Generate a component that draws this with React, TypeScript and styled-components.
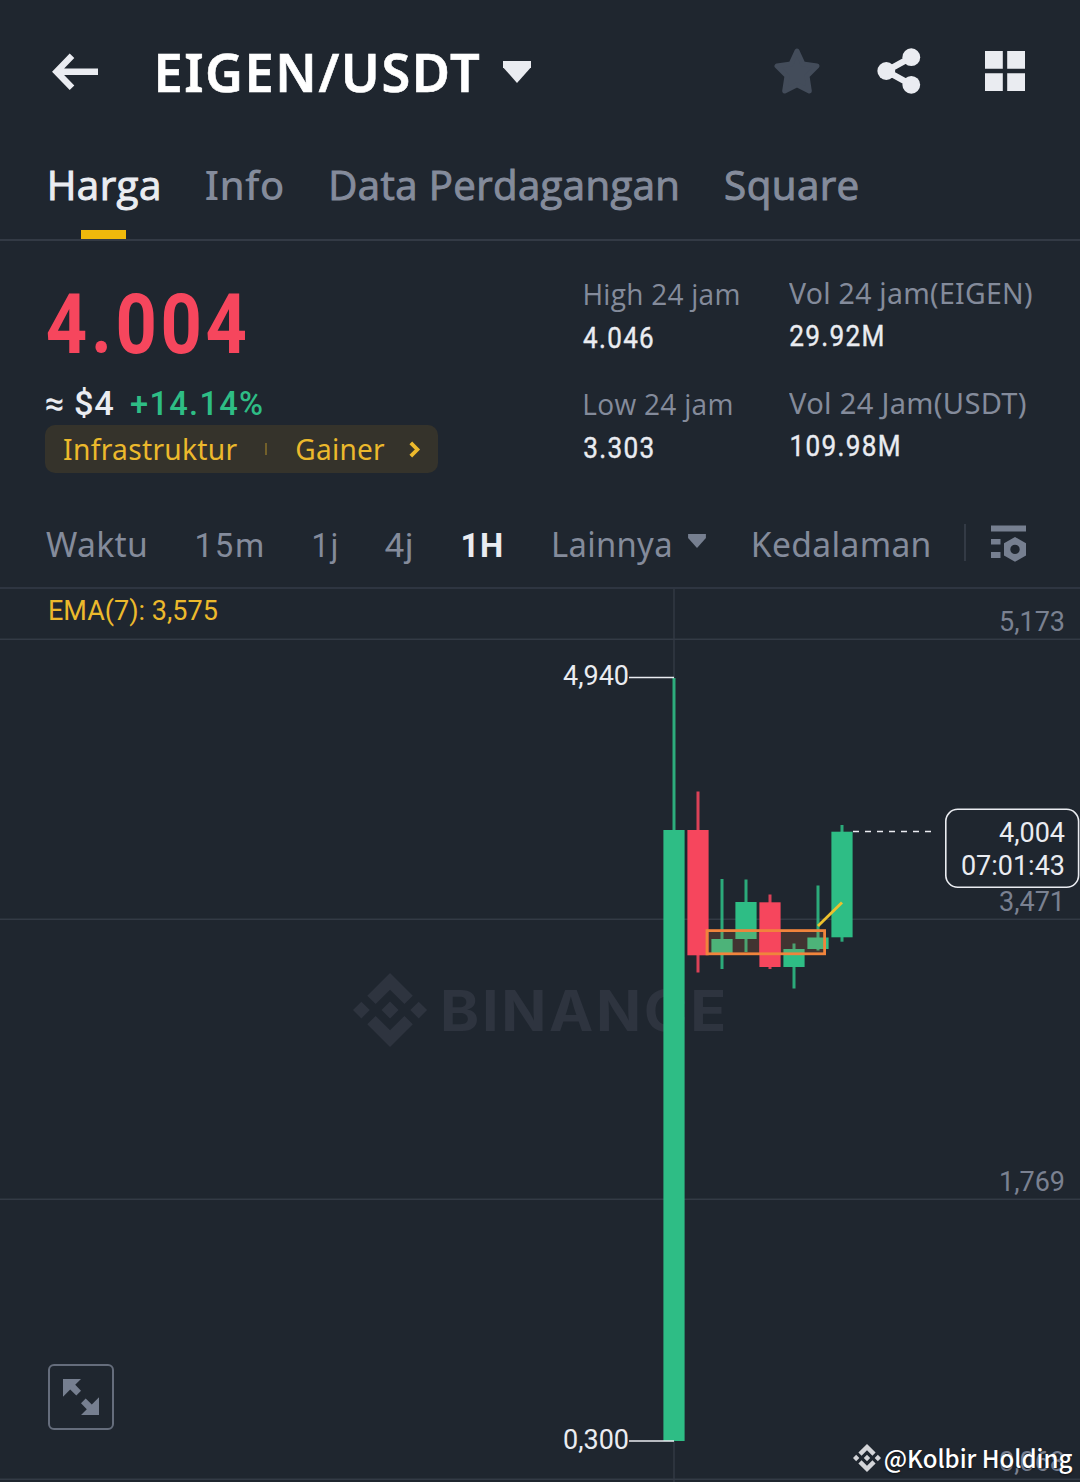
import React, { useLayoutEffect, useRef, useState } from 'react';
import styled, { createGlobalStyle } from 'styled-components';

const c = {
  bg: '#1f262f',
  line: '#333a45',
  grid: '#2e3541',
  text: '#eaecf1',
  white: '#ffffff',
  muted: '#848b9b',
  icon: '#767f90',
  yellow: '#f0b90b',
  gold: '#ecb92c',
  green: '#2ebd85',
  red: '#f6465d',
  orange: '#f0843c',
};

const open = '"Open Sans", "Noto Sans", sans-serif';
const noto = '"Noto Sans", "Open Sans", sans-serif';
const roboto = 'Roboto, "Noto Sans", sans-serif';
const cjk = '"Noto Sans CJK SC", "Noto Sans", sans-serif';

const Global = createGlobalStyle`
  html, body { margin: 0; padding: 0; background: ${c.bg}; }
  * { box-sizing: border-box; }
  svg { display: block; flex: none; }
`;

const Page = styled.main`
  width: 1080px;
  height: 1482px;
  overflow: hidden;
  display: flex;
  flex-direction: column;
  background: ${c.bg};
  color: ${c.text};
  font-family: ${open};
`;

/* ---------- text fitted to a column width ---------- */

const FitBox = styled.span<{ $w: number }>`
  display: flex;
  flex: none;
  width: ${(p) => p.$w}px;
  white-space: nowrap;
`;

const FitInner = styled.span<{
  $size: number;
  $weight: number;
  $color: string;
  $font: string;
  $ls: number;
  $stroke: number;
}>`
  display: block;
  flex: none;
  transform-origin: 0 50%;
  font-family: ${(p) => p.$font};
  font-size: ${(p) => p.$size}px;
  font-weight: ${(p) => p.$weight};
  letter-spacing: ${(p) => p.$ls}em;
  color: ${(p) => p.$color};
  -webkit-text-stroke: ${(p) => p.$stroke}px ${(p) => p.$color};
`;

type FitProps = {
  w: number;
  inset?: number;
  trim?: number;
  size: number;
  weight?: number;
  color?: string;
  font?: string;
  ls?: number;
  stroke?: number;
  children: string;
};

function Fit({
  w,
  inset = 0,
  trim = 0,
  size,
  weight = 400,
  color = c.text,
  font = open,
  ls = 0.01,
  stroke = 0,
  children,
}: FitProps) {
  const ref = useRef<HTMLSpanElement>(null);
  const [transform, setTransform] = useState('none');
  useLayoutEffect(() => {
    const ctx = document.createElement('canvas').getContext('2d');
    if (!ref.current || !ctx) return;
    // Measured at ten times the size, so that the ink bounds are precise.
    ctx.font = `${weight} ${size * 10}px ${font}`;
    const m = ctx.measureText(children);
    const left = m.actualBoundingBoxLeft / 10;
    const ink = left + m.actualBoundingBoxRight / 10 + ls * size * (children.length - 1);
    const k = (w - trim) / ink;
    setTransform(`translateX(${left * k + inset}px) scaleX(${k})`);
  }, [w, inset, trim, size, weight, font, ls, children]);
  return (
    <FitBox $w={w}>
      <FitInner
        ref={ref}
        $size={size}
        $weight={weight}
        $color={color}
        $font={font}
        $ls={ls}
        $stroke={stroke}
        style={{ transform }}
      >
        {children}
      </FitInner>
    </FitBox>
  );
}

/* ---------- header ---------- */

const Header = styled.header`
  height: 143px;
  flex: none;
  display: flex;
  align-items: center;
  padding: 0 55px 0 52px;
  line-height: 144px;
`;

const Title = styled.h1`
  display: flex;
  align-items: center;
  gap: 23px;
  margin: 0 auto 0 57px;
  font-size: inherit;
`;

const Actions = styled.div`
  display: flex;
  align-items: center;
  gap: 57px;
  margin-bottom: 1px;
`;

const GridSlot = styled.div`
  margin-left: 7px;
`;

const BackIcon = () => (
  <svg width="46" height="40" viewBox="52 51.5 46 40">
    <path d="M72 55.2 56.5 71.2 72 87.2M57 71.2H98" fill="none" stroke={c.text} strokeWidth="6.4" />
  </svg>
);

const Caret = ({ w, h, color }: { w: number; h: number; color: string }) => (
  <svg width={w} height={h} viewBox="0 0 28 22">
    <path d="M0 0H28V6.2L14 22 0 6.2Z" fill={color} />
  </svg>
);

const StarIcon = () => (
  <svg width="46" height="48" viewBox="774 47 46 48">
    <path
      d="M797 51 803 64 817 66 807 76 809.3 91 797 84.8 784.7 91 787 76 777 66 791 64Z"
      fill="#434c5a"
      stroke="#434c5a"
      strokeWidth="5"
      strokeLinejoin="round"
    />
  </svg>
);

const ShareIcon = () => (
  <svg width="44" height="48" viewBox="877 47 44 48">
    <path d="M911.3 57.2 886.3 71 911.3 84.8" fill="none" stroke={c.text} strokeWidth="6.4" />
    <circle cx="911.3" cy="57.2" r="8.9" fill={c.text} />
    <circle cx="886.3" cy="71" r="8.9" fill={c.text} />
    <circle cx="911.3" cy="84.8" r="8.9" fill={c.text} />
  </svg>
);

const GridIcon = () => (
  <svg width="40" height="40" viewBox="0 0 40 40">
    <path d="M0 0H17.8V17.8H0ZM22.2 0H40V17.8H22.2ZM0 22.2H17.8V40H0ZM22.2 22.2H40V40H22.2Z" fill={c.text} />
  </svg>
);

/* ---------- tabs ---------- */

const Tabs = styled.nav`
  height: 98px;
  flex: none;
  display: flex;
  gap: 46px;
  padding-left: 48px;
  border-bottom: 2px solid ${c.line};
  line-height: 84px;
`;

const Tab = styled.div`
  display: flex;
  flex-direction: column;
  align-items: center;
  height: 96px;
`;

const Underline = styled.i`
  flex: none;
  width: 45px;
  height: 9px;
  margin: 3px 1px 0 0;
  background: ${c.yellow};
`;

/* ---------- summary ---------- */

const Summary = styled.section`
  height: 259px;
  flex: none;
  display: flex;
`;

const PriceCol = styled.div`
  width: 538px;
  margin-left: 45px;
  padding-top: 33px;
  display: flex;
  flex-direction: column;
`;

const Price = styled.div`
  height: 107px;
  padding-left: 2px;
  line-height: 101px;
`;

const Change = styled.div`
  display: flex;
  gap: 17px;
  height: 44px;
  padding-left: 1px;
  line-height: 44px;
`;

const Chips = styled.div`
  display: flex;
  align-items: center;
  width: 393px;
  height: 48px;
  padding-left: 19px;
  border-radius: 10px;
  background: #35332b;
  line-height: 48px;
`;

const ChipDivider = styled.i`
  width: 2px;
  height: 12px;
  margin: 0 29px 0 28px;
  background: #72602a;
`;

const Chevron = styled.svg`
  margin-left: 25px;
`;

const StatCol = styled.div<{ $w: number; $top: number }>`
  width: ${(p) => p.$w}px;
  padding-top: ${(p) => p.$top}px;
  display: flex;
  flex-direction: column;
  gap: 22px;
`;

const Stat = styled.div`
  display: flex;
  flex-direction: column;
`;

const StatLabel = styled.div`
  height: 40px;
  line-height: 40px;
`;

const StatValue = styled.div<{ $lh: number }>`
  height: 48px;
  line-height: ${(p) => p.$lh}px;
`;

/* ---------- interval bar ---------- */

const Intervals = styled.nav`
  height: 89px;
  flex: none;
  display: flex;
  align-items: baseline;
  padding-left: 46px;
  border-bottom: 2px solid ${c.grid};
  line-height: 88px;
`;

const Slot = styled.div<{ $ml?: number }>`
  margin-left: ${(p) => p.$ml ?? 0}px;
`;

const IconSlot = styled.div<{ $ml: number; $up?: number }>`
  align-self: center;
  margin-left: ${(p) => p.$ml}px;
  margin-bottom: ${(p) => p.$up ?? 0}px;
`;

const BarDivider = styled.i`
  align-self: center;
  width: 2px;
  height: 37px;
  margin: 0 25px 2px 34px;
  background: ${c.line};
`;

const SettingsIcon = () => (
  <svg width="36" height="37" viewBox="0 0 36 37">
    <path d="M0 0.5H35V6.5H0ZM0 14H9.5V19.5H0ZM0 27H9.5V33H0Z" fill={c.icon} />
    <path
      fillRule="evenodd"
      fill={c.icon}
      d="M24 12 35 18.2V30.6L24 36.8 13 30.6V18.2ZM24 19.7A4.7 4.7 0 1 0 24 29.1 4.7 4.7 0 1 0 24 19.7Z"
    />
  </svg>
);

/* ---------- chart ---------- */

const ChartArea = styled.section`
  position: relative;
  height: 893px;
  flex: none;
`;

const ExpandButton = styled.button`
  position: absolute;
  left: 48px;
  top: 775px;
  width: 66px;
  height: 66px;
  padding: 0;
  display: grid;
  place-items: center;
  border: 2px solid #656d7c;
  border-radius: 6px;
  background: transparent;
`;

const Credit = styled.div`
  position: absolute;
  left: 853px;
  top: 850px;
  display: flex;
  align-items: center;
  gap: 4px;
  line-height: 37px;
  text-shadow: 0 1px 2px rgba(0, 0, 0, 0.6);
`;

const AxisText = styled.text<{ $fill?: string }>`
  font-family: ${roboto};
  font-size: 27px;
  fill: ${(p) => p.$fill ?? '#7a8191'};
`;

const MarkText = styled.text`
  font-family: Inter, ${roboto};
  font-size: 56px;
  font-weight: 700;
  letter-spacing: 2.5px;
  fill: #2e343f;
`;

const LogoPaths = ({ fill }: { fill: string }) => (
  <path
    fill={fill}
    d="M38.7 53.2 63.3 28.6 87.9 53.2 102.2 38.9 63.3 0 24.4 38.9ZM0 63.3 14.3 49 28.6 63.3 14.3 77.6ZM38.7 73.4 63.3 98 87.9 73.4 102.2 87.7 63.3 126.6 24.4 87.7ZM98 63.3 112.3 49 126.6 63.3 112.3 77.6ZM77.8 63.3 63.3 48.8 48.8 63.3 63.3 77.8Z"
  />
);

type Candle = { x: number; top: number; bottom: number; high: number; low: number; up: boolean };

const candles: Candle[] = [
  { x: 674, top: 830, bottom: 1441, high: 678, low: 1441, up: true },
  { x: 698, top: 830, bottom: 955.3, high: 791.5, low: 972.5, up: false },
  { x: 722, top: 939, bottom: 955, high: 879, low: 969, up: true },
  { x: 746, top: 902, bottom: 939, high: 879.5, low: 952, up: true },
  { x: 770, top: 902.3, bottom: 967, high: 894.5, low: 969, up: false },
  { x: 794, top: 949, bottom: 967, high: 943.5, low: 988.5, up: true },
  { x: 818, top: 937.5, bottom: 949, high: 885.5, low: 950.5, up: true },
  { x: 842, top: 831.7, bottom: 937.3, high: 825, low: 941.7, up: true },
];

const Chart = () => (
  <svg width="1080" height="893" viewBox="0 589 1080 893">
    <path d="M0 639.3H1080M0 919.3H1080M0 1199.3H1080M0 1479.3H1080M674 589V1482" stroke={c.line} strokeWidth="1.4" />
    <g transform="translate(353 973) scale(.585)">
      <LogoPaths fill="#2e343f" />
    </g>
    <MarkText x="440" y="1030.5" textLength="289" lengthAdjust="spacingAndGlyphs">BINANCE</MarkText>
    {candles.map((k) => (
      <g key={k.x} fill={k.up ? c.green : c.red}>
        <rect x={k.x - 1.5} y={k.high} width="3" height={k.low - k.high} opacity="0.88" />
        <rect x={k.x - 10.6} y={k.top} width="21.2" height={k.bottom - k.top} />
      </g>
    ))}
    <rect x="707" y="930.6" width="117.6" height="23.2" fill="rgba(240,132,60,.16)" />
    <rect x="759.4" y="930" width="21.2" height="25" fill={c.red} />
    <rect x="707" y="930.6" width="117.6" height="23.2" fill="none" stroke={c.orange} strokeWidth="2.8" />
    <path d="M818 926 842 902.6" stroke="#eec12d" strokeWidth="2.8" />
    <path d="M629 677.5H674M629 1441H674" stroke={c.text} strokeWidth="1.6" />
    <path d="M853 831.5H931" stroke={c.text} strokeWidth="1.6" strokeDasharray="6 6" />
    <rect x="945.8" y="809.3" width="132.8" height="78" rx="12" fill={c.bg} stroke={c.text} strokeWidth="1.6" />
    <AxisText x="48" y="620" $fill={c.gold}>EMA(7): 3,575</AxisText>
    <AxisText x="1065" y="631" textAnchor="end">5,173</AxisText>
    <AxisText x="1065" y="911" textAnchor="end">3,471</AxisText>
    <AxisText x="1065" y="1191" textAnchor="end">1,769</AxisText>
    <AxisText x="1065" y="1471" textAnchor="end">0,068</AxisText>
    <AxisText x="629" y="685" textAnchor="end" $fill={c.text}>4,940</AxisText>
    <AxisText x="629" y="1449" textAnchor="end" $fill={c.text}>0,300</AxisText>
    <AxisText x="1065" y="842" textAnchor="end" $fill={c.text}>4,004</AxisText>
    <AxisText x="1065" y="875" textAnchor="end" $fill={c.text}>07:01:43</AxisText>
  </svg>
);

type StatItem = { label: string; lw: number; font: string; inset: number; value: string; vw: number; vInset: number };

const statCols: { w: number; top: number; lh: number; items: StatItem[] }[] = [
  {
    w: 206,
    top: 33,
    lh: 48,
    items: [
      { label: 'High 24 jam', lw: 156, font: open, inset: 2, value: '4.046', vw: 70, vInset: 0.5 },
      { label: 'Low 24 jam', lw: 149, font: open, inset: 2, value: '3.303', vw: 70, vInset: 1 },
    ],
  },
  {
    w: 260,
    top: 32,
    lh: 46,
    items: [
      { label: 'Vol 24 jam(EIGEN)', lw: 243, font: noto, inset: 0, value: '29.92M', vw: 94, vInset: 1 },
      { label: 'Vol 24 Jam(USDT)', lw: 237, font: noto, inset: 0, value: '109.98M', vw: 110, vInset: 2.5 },
    ],
  },
];

const tabs = [
  { label: 'Harga', w: 111, inset: 2.5, font: open, weight: 400, stroke: 1, active: true },
  { label: 'Info', w: 78, inset: 1, font: noto, weight: 500, stroke: 0, active: false },
  { label: 'Data Perdagangan', w: 349, inset: 3, font: open, weight: 400, stroke: 1, active: false },
  { label: 'Square', w: 134, inset: 2, font: open, weight: 400, stroke: 1, active: false },
];

export default function App() {
  return (
    <Page>
      <Global />
      <Header>
        <BackIcon />
        <Title>
          <Fit w={325} inset={2.5} trim={3} size={53} weight={600} stroke={0.6} color={c.white} font={noto} ls={0.03}>
            EIGEN/USDT
          </Fit>
          <Caret w={28} h={22} color={c.text} />
        </Title>
        <Actions>
          <StarIcon />
          <ShareIcon />
          <GridSlot>
            <GridIcon />
          </GridSlot>
        </Actions>
      </Header>

      <Tabs>
        {tabs.map((t) => (
          <Tab key={t.label}>
            <Fit
              w={t.w}
              inset={t.inset}
              trim={t.inset + 0.5}
              size={40.6}
              weight={t.weight}
              stroke={t.stroke}
              color={t.active ? c.text : c.muted}
              font={t.font}
            >
              {t.label}
            </Fit>
            {t.active && <Underline />}
          </Tab>
        ))}
      </Tabs>

      <Summary>
        <PriceCol>
          <Price>
            <Fit w={199} trim={1} size={83} weight={700} color={c.red} font={roboto} ls={0.05}>4.004</Fit>
          </Price>
          <Change>
            <Fit w={67} size={34} weight={500} font={roboto} ls={0.02}>≈ $4</Fit>
            <Fit w={132} inset={1} trim={1} size={34} weight={500} color={c.green} font={roboto} ls={0.04}>+14.14%</Fit>
          </Change>
          <Chips>
            <Fit w={173} size={29.5} color={c.gold} font={noto}>Infrastruktur</Fit>
            <ChipDivider />
            <Fit w={88} inset={0.5} size={29.5} color={c.gold} font={noto}>Gainer</Fit>
            <Chevron width="12" height="17" viewBox="0 0 12 17">
              <path d="M1.8 1.8 8.4 8.5 1.8 15.2" fill="none" stroke={c.gold} strokeWidth="3.8" />
            </Chevron>
          </Chips>
        </PriceCol>
        {statCols.map((col) => (
          <StatCol key={col.w} $w={col.w} $top={col.top}>
            {col.items.map((s) => (
              <Stat key={s.label}>
                <StatLabel>
                  <Fit w={s.lw} inset={s.inset} trim={s.inset + 0.5} size={29} color={c.muted} font={s.font}>{s.label}</Fit>
                </StatLabel>
                <StatValue $lh={col.lh}>
                  <Fit w={s.vw} inset={s.vInset} trim={s.vInset + 0.5} size={29} stroke={0.4} font={roboto} ls={0.05}>
                    {s.value}
                  </Fit>
                </StatValue>
              </Stat>
            ))}
          </StatCol>
        ))}
      </Summary>

      <Intervals>
        <Slot><Fit w={100} trim={0.5} size={34} color={c.muted} font={noto}>Waktu</Fit></Slot>
        <Slot $ml={50}><Fit w={67} inset={1} trim={2} size={34} color={c.muted} font={roboto} ls={0.06}>15m</Fit></Slot>
        <Slot $ml={50}><Fit w={24} inset={1} trim={2} size={34} color={c.muted} font={roboto} ls={0.05}>1j</Fit></Slot>
        <Slot $ml={48}><Fit w={27} trim={1} size={34} color={c.muted} font={roboto} ls={0.02}>4j</Fit></Slot>
        <Slot $ml={50}><Fit w={40} inset={1} trim={1.5} size={34} weight={700} font={roboto} ls={0.02}>1H</Fit></Slot>
        <Slot $ml={50}><Fit w={119} inset={2} trim={3} size={34} color={c.muted} font={noto}>Lainnya</Fit></Slot>
        <IconSlot $ml={17} $up={5}><Caret w={18} h={14} color={c.icon} /></IconSlot>
        <Slot $ml={46}><Fit w={178} inset={2} trim={3} size={34} color={c.muted} font={noto}>Kedalaman</Fit></Slot>
        <BarDivider />
        <IconSlot $ml={0}><SettingsIcon /></IconSlot>
      </Intervals>

      <ChartArea>
        <Chart />
        <ExpandButton aria-label="Expand">
          <svg width="38" height="38" viewBox="0 0 38 38">
            <path
              fill={c.icon}
              d="M1 1H19L13.2 6.8 19 12.8 14.3 17.5 8.2 11.5 1 18.7ZM37 37H19L24.8 31.2 19 25.2 23.7 20.5 29.8 26.5 37 19.3Z"
            />
          </svg>
        </ExpandButton>
        <Credit>
          <svg width="28" height="28" viewBox="0 0 126.6 126.6">
            <LogoPaths fill="#d3d4d8" />
          </svg>
          <Fit w={187} size={24.5} weight={500} color={c.white} font={cjk} ls={0}>@Kolbir Holding</Fit>
        </Credit>
      </ChartArea>
    </Page>
  );
}
